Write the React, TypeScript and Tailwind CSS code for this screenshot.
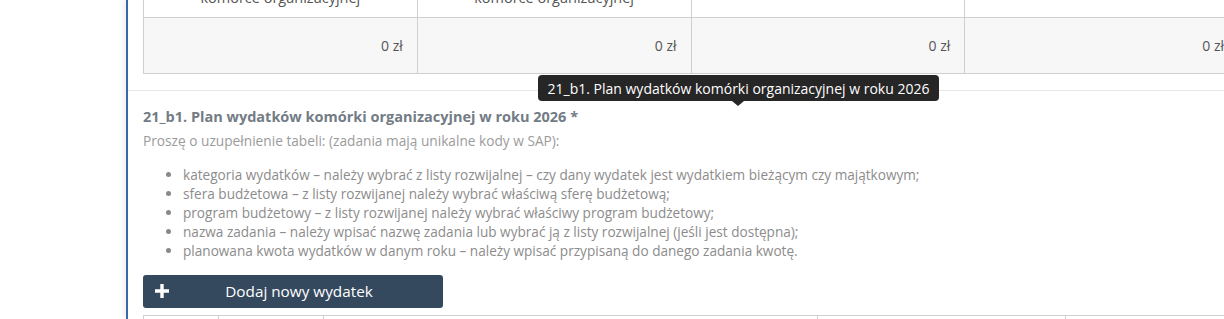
import { FunctionComponent } from "react";

const listItems = [
  "kategoria wydatków – należy wybrać z listy rozwijalnej – czy dany wydatek jest wydatkiem bieżącym czy majątkowym;",
  "sfera budżetowa – z listy rozwijanej należy wybrać właściwą sferę budżetową;",
  "program budżetowy – z listy rozwijanej należy wybrać właściwy program budżetowy;",
  "nazwa zadania – należy wpisać nazwę zadania lub wybrać ją z listy rozwijalnej (jeśli jest dostępna);",
  "planowana kwota wydatków w danym roku – należy wpisać przypisaną do danego zadania kwotę.",
];

const headers = [
  ["Planowane wydatki w", "komórce organizacyjnej"],
  ["Zaplanowane wydatki w", "komórce organizacyjnej"],
  ["Razem"],
  ["Różnica"],
];

const App: FunctionComponent = () => {
  return (
    <div className="relative w-[1224px] h-[319px] overflow-hidden bg-white font-['Open_Sans',sans-serif]">
      <div className="ml-[126px] h-full border-l-2 border-[#3a66ad] shadow-[-4px_0_5px_rgba(0,0,0,0.05)] overflow-hidden">
        {/* poprzednia tabela */}
        <div className="pl-[15px] pb-[16px]">
          <table className="-mt-[40px] border-collapse w-[1096px] table-fixed text-[#555] text-[14px]">
            <tbody>
              <tr className="h-[57px]">
                {headers.map((h, idx) => (
                  <td
                    key={idx}
                    className="border border-[#cfcfcf] border-t-0 text-center align-bottom pb-[10px] leading-[19px] text-[14.5px]"
                  >
                    {h.length > 1 ? (
                      <>
                        {h[0]}
                        <br />
                        {h[1]}
                      </>
                    ) : null}
                  </td>
                ))}
              </tr>
              <tr className="h-[56px] bg-[#f7f7f7]">
                {headers.map((_, idx) => (
                  <td
                    key={idx}
                    className="border border-[#cfcfcf] text-right pr-[14px]"
                  >
                    0 zł
                  </td>
                ))}
              </tr>
            </tbody>
          </table>
        </div>

        <div className="border-t border-[#e6e6e6] pl-[15px] pt-[16px]">
          <p className="text-[14.5px] font-bold text-[#737c85] leading-[20px]">
            21_b1. Plan wydatków komórki organizacyjnej w roku 2026 *
          </p>
          <p className="mt-[5px] text-[13.7px] text-[#9b9b9b] leading-[18px]">
            Proszę o uzupełnienie tabeli: (zadania mają unikalne kody w SAP):
          </p>
          <ul className="mt-[15px] list-disc pl-[40px] text-[13.6px] text-[#8c8c8c] leading-[19px] marker:text-[#888]">
            {listItems.map((item, idx) => (
              <li key={idx}>{item}</li>
            ))}
          </ul>
          <button className="mt-[15px] w-[300px] h-[33px] rounded-[3px] bg-[#34495e] text-white flex items-center pl-[12px]">
            <svg width="14" height="14" viewBox="0 0 14 14" className="shrink-0">
              <path d="M5.3 0h3.4v5.3H14v3.4H8.7V14H5.3V8.7H0V5.3h5.3z" fill="#fff" />
            </svg>
            <span className="flex-1 text-center text-[15.3px] pr-[14px]">
              Dodaj nowy wydatek
            </span>
          </button>
          <div className="mt-[7px] flex border-t border-l border-[#cfcfcf] h-[10px] w-[1096px]">
            <div className="w-[75px] border-r border-[#cfcfcf]" />
            <div className="w-[105px] border-r border-[#cfcfcf]" />
            <div className="w-[494px] border-r border-[#cfcfcf]" />
            <div className="w-[248px] border-r border-[#cfcfcf]" />
          </div>
        </div>
      </div>

      {/* tooltip */}
      <div className="absolute left-[538px] top-[75px] w-[401px] h-[26px] rounded-[4px] bg-[#262626] text-white text-[14px] flex items-center justify-center">
        21_b1. Plan wydatków komórki organizacyjnej w roku 2026
        <div className="absolute left-[194px] -bottom-[5px] w-0 h-0 border-l-[6px] border-r-[6px] border-t-[5px] border-l-transparent border-r-transparent border-t-[#262626]" />
      </div>
    </div>
  );
};

export default App;
